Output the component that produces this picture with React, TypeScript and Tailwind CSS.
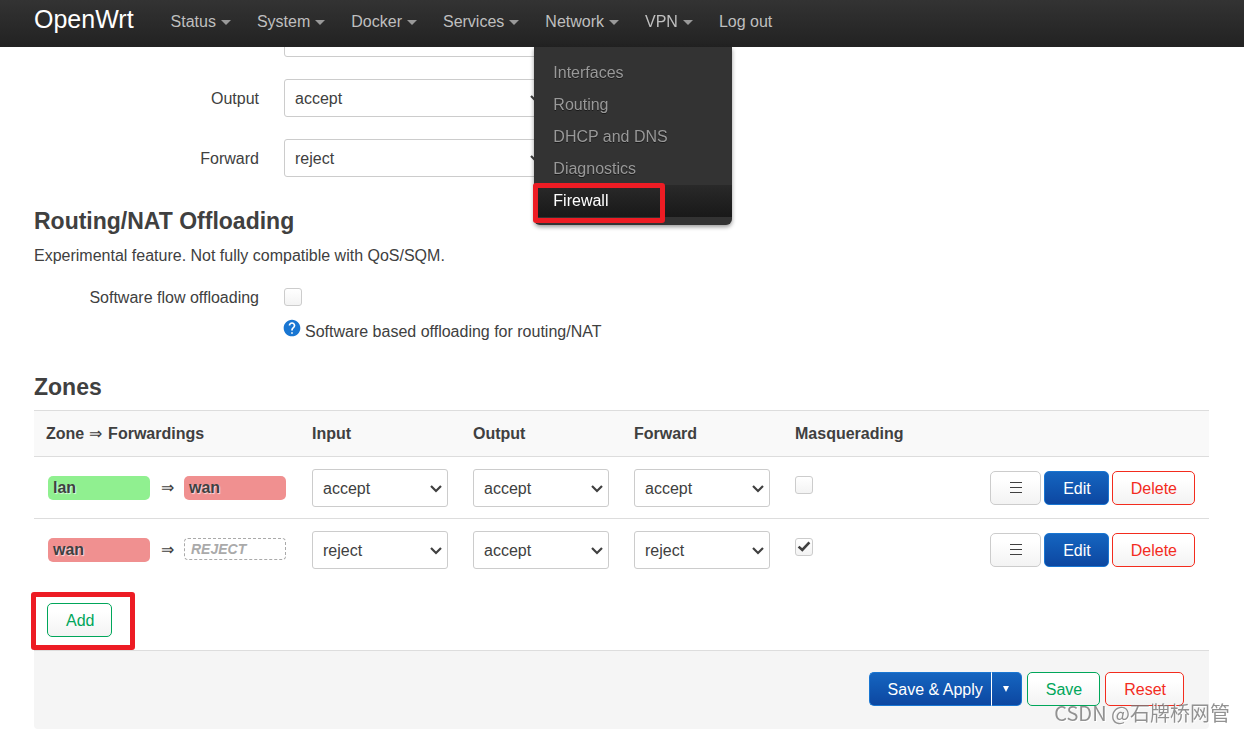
import React from 'react';
import clsx from 'clsx';
import { MdHelp } from 'react-icons/md';

type Policy = 'accept' | 'reject' | 'drop';

interface Zone {
  name: string;
  forward: string | null;
  input: Policy;
  output: Policy;
  forwarding: Policy;
  masq: boolean;
}

const MENU = ['Status', 'System', 'Docker', 'Services', 'Network', 'VPN'];
const NETWORK_ITEMS = ['Interfaces', 'Routing', 'DHCP and DNS', 'Diagnostics', 'Firewall'];

const ZONES: Zone[] = [
  { name: 'lan', forward: 'wan', input: 'accept', output: 'accept', forwarding: 'accept', masq: false },
  { name: 'wan', forward: null, input: 'reject', output: 'accept', forwarding: 'reject', masq: true },
];

const BUTTON_STYLES = {
  neutral: 'border-[#ccc] bg-linear-to-b from-white from-25% to-[#f3f3f3] text-[#404040]',
  action: 'border-[#1976d2] bg-linear-to-b from-[#1565c0] to-[#0d47a1] text-white',
  add: 'border-[#00a65a] bg-linear-to-b from-white from-25% to-[#f3f3f3] text-[#00a65a]',
  remove: 'border-[#f32c1e] bg-linear-to-b from-white from-25% to-[#f3f3f3] text-[#f32c1e]',
};

interface ButtonProps extends React.ButtonHTMLAttributes<HTMLButtonElement> {
  kind: keyof typeof BUTTON_STYLES;
}

const Button: React.FC<ButtonProps> = ({ kind, className, ...rest }) => (
  <button
    type="button"
    className={clsx('h-[34px] rounded-[5px] border pl-[18px] pt-0.5 leading-5', BUTTON_STYLES[kind], className ?? 'pr-[17px]')}
    {...rest}
  />
);

const PolicySelect: React.FC<{ id?: string; label?: string; value: Policy; className?: string }> = ({
  id,
  label,
  value,
  className,
}) => (
  <div className={clsx('relative', className)}>
    <select
      id={id}
      aria-label={label}
      defaultValue={value}
      className="block h-[38px] w-full appearance-none rounded-[3px] border border-[#ccc] bg-white px-2.5 pt-0.5 text-[#404040]"
    >
      <option value="accept">accept</option>
      <option value="reject">reject</option>
      <option value="drop">drop</option>
    </select>
    <svg
      viewBox="0 0 12 8"
      className="pointer-events-none absolute right-1.5 top-4 h-2 w-3"
      fill="none"
      stroke="#404040"
      strokeWidth="2.2"
    >
      <path d="M1 1 6 6 11 1" />
    </svg>
  </div>
);

const Checkbox: React.FC<{ id?: string; label?: string; checked?: boolean }> = ({ id, label, checked }) => (
  <span className="relative block size-[18px]">
    <input
      id={id}
      aria-label={label}
      type="checkbox"
      defaultChecked={checked}
      className="peer block size-[18px] appearance-none rounded-[3px] border border-[#ccc] bg-linear-to-b from-white to-[#f3f3f3]"
    />
    <svg
      viewBox="0 0 18 18"
      className="pointer-events-none absolute inset-0 hidden size-[18px] peer-checked:block"
      fill="none"
      stroke="#404040"
      strokeWidth="2.6"
    >
      <path d="M3.6 8.6 7.3 12 14.4 4.4" />
    </svg>
  </span>
);

const ZoneBadge: React.FC<{ name: string }> = ({ name }) => (
  <span
    className={clsx(
      'h-6 w-[102px] rounded-[5px] px-[5px] font-bold leading-6 [text-shadow:1px_1px_1px_rgba(255,255,255,0.7)]',
      name === 'lan' ? 'bg-[#90f090]' : 'bg-[#f09090]'
    )}
  >
    {name}
  </span>
);

const FormRow: React.FC<{ id: string; label: string; value: Policy }> = ({ id, label, value }) => (
  <div className="flex items-center gap-[25px]">
    <label htmlFor={id} className="w-[225px] pt-0.5 text-right">
      {label}
    </label>
    <PolicySelect id={id} value={value} className="w-[264px]" />
  </div>
);

const Header = () => (
  <header className="fixed inset-x-0 top-0 z-10 flex h-[47px] items-start bg-linear-to-b from-[#333] to-[#222] px-[34px]">
    <a href="#" className="mr-6 py-[5px] text-[25px] leading-7 text-white">
      OpenWrt
    </a>
    <nav>
      <ul className="flex text-[#bfbfbf]">
        {MENU.map((name) => (
          <li key={name} className="relative">
            <a href="#" className="flex h-11 items-center gap-[5px] px-[13px]">
              {name}
              <span className="border-x-5 border-t-5 border-x-transparent border-t-[#999]" />
            </a>
            {name === 'Network' && <NetworkMenu />}
          </li>
        ))}
        <li>
          <a href="#" className="flex h-11 items-center px-[13px]">
            Log out
          </a>
        </li>
      </ul>
    </nav>
  </header>
);

const NetworkMenu = () => (
  <ul className="absolute left-0.5 top-[47px] w-[198px] rounded-b-md bg-[#333] pb-2 pt-[10px] text-[#999] shadow-[0_2px_4px_rgba(0,0,0,0.4)]">
    {NETWORK_ITEMS.map((item) => {
      const active = item === 'Firewall';
      return (
        <li key={item} className="relative">
          <a
            href="#"
            className={clsx(
              'block px-[19px] leading-8',
              active ? 'bg-linear-to-b from-[#292929] to-[#191919] text-white' : '[text-shadow:0_1px_0_rgba(0,0,0,0.5)]'
            )}
          >
            {item}
          </a>
          {active && (
            <span className="pointer-events-none absolute -left-px -top-0.5 h-10 w-[132px] rounded-[3px] border-5 border-[#ed1c24]" />
          )}
        </li>
      );
    })}
  </ul>
);

const ZoneTable = () => (
  <table className="w-full table-fixed border-separate border-spacing-0 text-left">
    <thead>
      <tr className="bg-[#f9f9f9] [&>th]:h-[46px] [&>th]:border-t [&>th]:border-[#ddd] [&>th]:px-3">
        <th className="w-[266px]">
          Zone <span className="pr-0.5 font-normal">⇒</span> Forwardings
        </th>
        <th className="w-[161px]">Input</th>
        <th className="w-[161px]">Output</th>
        <th className="w-[161px]">Forward</th>
        <th>Masquerading</th>
        <th className="w-[240px]" />
      </tr>
    </thead>
    <tbody>
      {ZONES.map((zone) => (
        <tr
          key={zone.name}
          className="[&>td]:h-[62px] [&>td]:border-t [&>td]:border-[#ddd] [&>td]:pl-3 [&>td]:pr-[13px]"
        >
          <td>
            <div className="flex h-6 items-start pl-0.5">
              <ZoneBadge name={zone.name} />
              <span className="w-[34px] text-center leading-6">⇒</span>
              {zone.forward ? (
                <ZoneBadge name={zone.forward} />
              ) : (
                <span className="h-[22px] w-[102px] rounded-[4px] border border-dashed border-[#aaa] px-1.5 text-sm font-bold italic leading-5 text-[#aaa]">
                  REJECT
                </span>
              )}
            </div>
          </td>
          <td>
            <PolicySelect label={`${zone.name} input`} value={zone.input} />
          </td>
          <td>
            <PolicySelect label={`${zone.name} output`} value={zone.output} />
          </td>
          <td>
            <PolicySelect label={`${zone.name} forward`} value={zone.forwarding} />
          </td>
          <td>
            <div className="pb-1.5">
              <Checkbox label={`${zone.name} masquerading`} checked={zone.masq} />
            </div>
          </td>
          <td>
            <div className="flex justify-end gap-[3px] pr-px">
              <Button kind="neutral" aria-label="Drag to reorder">
                <svg width="14" height="14" viewBox="0 0 14 14" stroke="currentColor">
                  <path d="M1 .5h12M1 5.5h12M1 10.5h12" />
                </svg>
              </Button>
              <Button kind="action">Edit</Button>
              <Button kind="remove">Delete</Button>
            </div>
          </td>
        </tr>
      ))}
    </tbody>
  </table>
);

export default function App() {
  return (
    <div className="bg-white font-['Liberation_Sans',Arial,sans-serif] text-base leading-6 text-[#404040]">
      <Header />

      <main className="pb-[3px] pl-[34px] pr-[35px] pt-[19px]">
        {/* General policies */}
        <div className="flex flex-col gap-[22px]">
          <FormRow id="input" label="Input" value="accept" />
          <FormRow id="output" label="Output" value="accept" />
          <FormRow id="forward" label="Forward" value="reject" />
        </div>

        <h3 className="mt-[29px] text-[23px] font-bold leading-[30px]">Routing/NAT Offloading</h3>
        <p className="mt-2">Experimental feature. Not fully compatible with QoS/SQM.</p>
        <div className="mt-[18px] flex gap-[25px]">
          <label htmlFor="offload" className="w-[225px] text-right">
            Software flow offloading
          </label>
          <div>
            <div className="py-0.5">
              <Checkbox id="offload" />
            </div>
            <p className="mt-3 flex gap-[3px]">
              <MdHelp size={20} className="-ml-0.5 -mt-0.5 text-[#1976d2]" />
              Software based offloading for routing/NAT
            </p>
          </div>
        </div>

        <h3 className="mb-2 mt-7 text-[23px] font-bold leading-[30px]">Zones</h3>
        <ZoneTable />
        <div className="relative mt-[23px] px-[13px] pb-[13px]">
          <Button kind="add">Add</Button>
          <span className="pointer-events-none absolute -left-[3px] -top-[11px] h-[58px] w-[104px] rounded-[3px] border-5 border-[#ed1c24]" />
        </div>

        <footer className="flex justify-end gap-[5px] rounded-b-[4px] border-t border-[#ddd] bg-[#f5f5f5] pb-[23px] pl-6 pr-[25px] pt-[21px]">
          <div className="flex">
            <Button kind="action" className="rounded-r-none border-r-0 pr-2">
              Save &amp; Apply
            </Button>
            <button
              type="button"
              aria-label="More apply options"
              className="flex h-[34px] w-[31px] items-center justify-center rounded-r-[5px] border border-[#1976d2] border-l-white bg-linear-to-b from-[#1565c0] to-[#0d47a1]"
            >
              <span className="border-x-3 border-t-6 border-x-transparent border-t-white" />
            </button>
          </div>
          <Button kind="add">Save</Button>
          <Button kind="remove">Reset</Button>
        </footer>
      </main>

      <div className="pointer-events-none fixed bottom-[5px] right-3.5 font-['Noto_Sans_CJK_SC',sans-serif] text-xl leading-7 text-[#777]/80 [text-shadow:1px_1px_0_#fff]">
        CSDN @石牌桥网管
      </div>
    </div>
  );
}
